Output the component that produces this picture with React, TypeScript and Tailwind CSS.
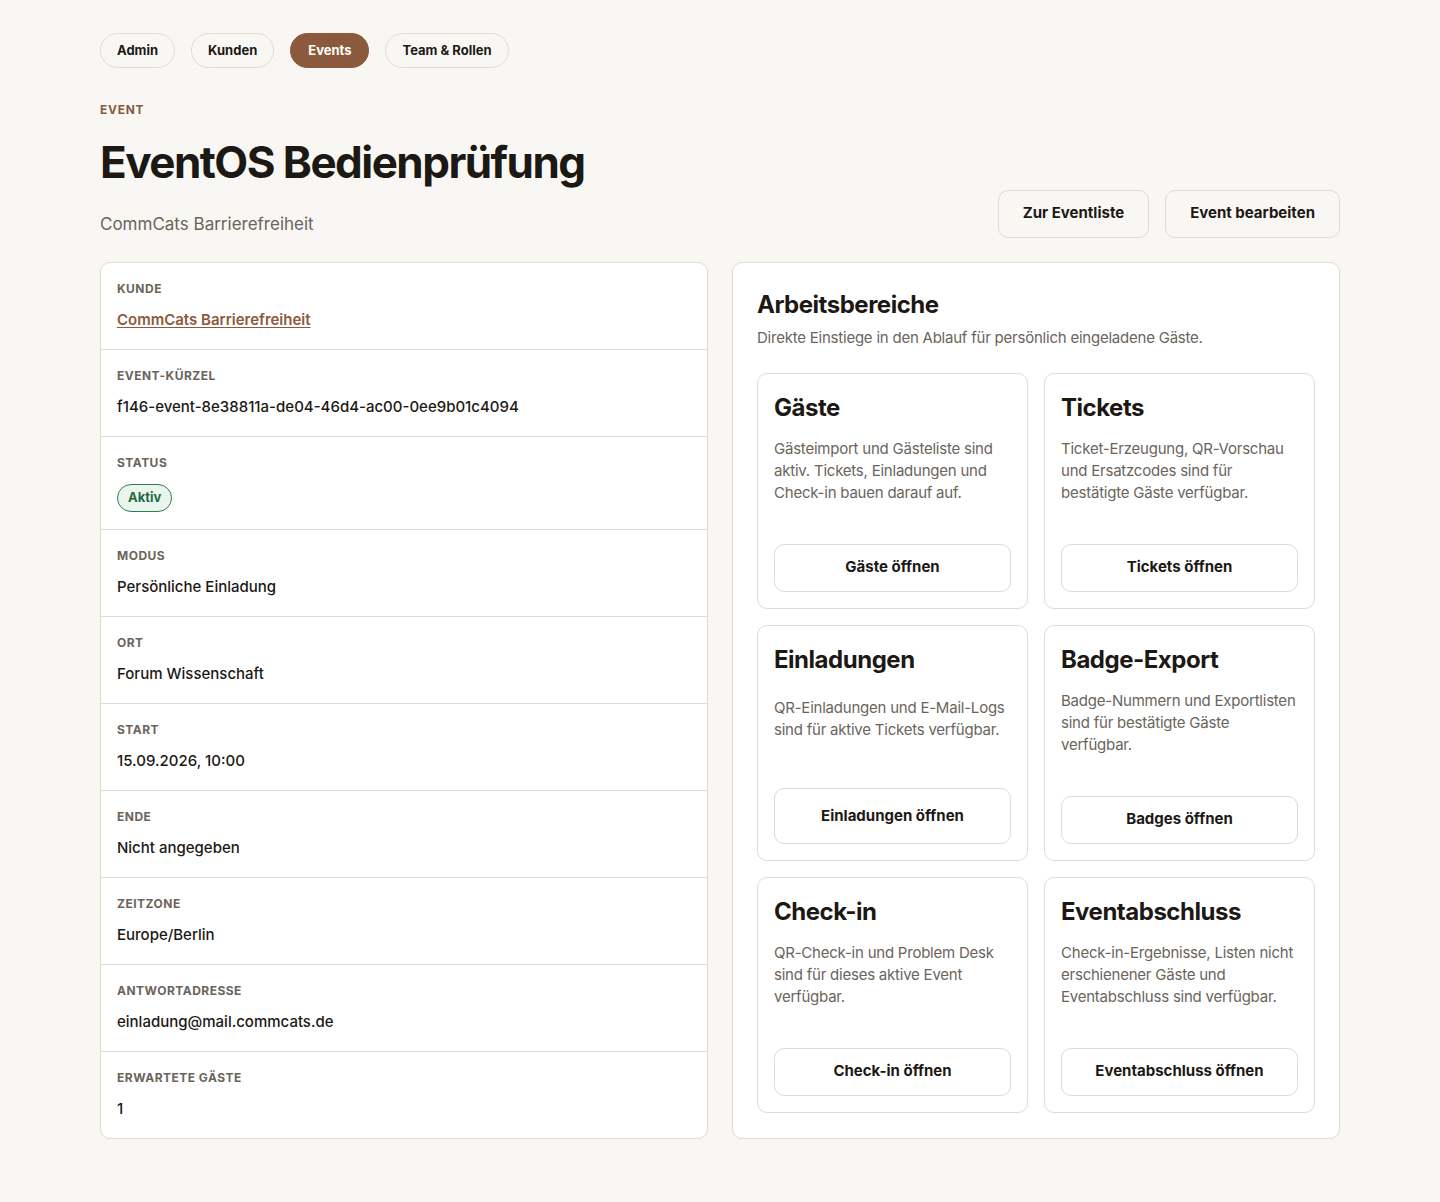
import React from 'react';

const navItems = [
  { label: 'Admin', active: false },
  { label: 'Kunden', active: false },
  { label: 'Events', active: true },
  { label: 'Team & Rollen', active: false },
];

const details: { label: string; value: string; kind?: 'link' | 'badge' }[] = [
  { label: 'Kunde', value: 'CommCats Barrierefreiheit', kind: 'link' },
  { label: 'Event-Kürzel', value: 'f146-event-8e38811a-de04-46d4-ac00-0ee9b01c4094' },
  { label: 'Status', value: 'Aktiv', kind: 'badge' },
  { label: 'Modus', value: 'Persönliche Einladung' },
  { label: 'Ort', value: 'Forum Wissenschaft' },
  { label: 'Start', value: '15.09.2026, 10:00' },
  { label: 'Ende', value: 'Nicht angegeben' },
  { label: 'Zeitzone', value: 'Europe/Berlin' },
  { label: 'Antwortadresse', value: 'einladung@mail.commcats.de' },
  { label: 'Erwartete Gäste', value: '1' },
];

const areas = [
  {
    title: 'Gäste',
    text: 'Gästeimport und Gästeliste sind aktiv. Tickets, Einladungen und Check-in bauen darauf auf.',
    action: 'Gäste öffnen',
  },
  {
    title: 'Tickets',
    text: 'Ticket-Erzeugung, QR-Vorschau und Ersatzcodes sind für bestätigte Gäste verfügbar.',
    action: 'Tickets öffnen',
  },
  {
    title: 'Einladungen',
    text: 'QR-Einladungen und E-Mail-Logs sind für aktive Tickets verfügbar.',
    action: 'Einladungen öffnen',
  },
  {
    title: 'Badge-Export',
    text: 'Badge-Nummern und Exportlisten sind für bestätigte Gäste verfügbar.',
    action: 'Badges öffnen',
  },
  {
    title: 'Check-in',
    text: 'QR-Check-in und Problem Desk sind für dieses aktive Event verfügbar.',
    action: 'Check-in öffnen',
  },
  {
    title: 'Eventabschluss',
    text: 'Check-in-Ergebnisse, Listen nicht erschienener Gäste und Eventabschluss sind verfügbar.',
    action: 'Eventabschluss öffnen',
  },
];

export default function App() {
  return (
    <div className="min-h-[1202px] bg-[#f8f7f3] text-[#1c1915] font-['Inter','Liberation_Sans',sans-serif] antialiased">
      <div className="mx-auto max-w-[1240px] pt-[33px] pb-16">
        {/* Navigation */}
        <nav className="flex gap-4">
          {navItems.map((item) => (
            <a
              key={item.label}
              className={
                item.active
                  ? 'h-[35px] px-[17px] flex items-center rounded-full border border-[#8b5a3c] bg-[#8b5a3c] text-white text-[13px] font-bold'
                  : 'h-[35px] px-[16px] flex items-center rounded-full border border-[#e2dbd0] bg-[#f9f7f3] text-[#1c1915] text-[13px] font-bold'
              }
            >
              {item.label}
            </a>
          ))}
        </nav>

        {/* Header */}
        <div className="mt-[33px] flex items-end justify-between">
          <div>
            <p className="text-[12px] leading-[18px] font-bold uppercase tracking-[0.06em] text-[#8b5a3c]">Event</p>
            <h1 className="mt-[18px] text-[44px] leading-[1.15] font-bold tracking-[-0.035em]">EventOS Bedienprüfung</h1>
            <p className="mt-[22px] text-[17px] leading-[28px] text-[#6b645c]">CommCats Barrierefreiheit</p>
          </div>
          <div className="flex gap-4">
            <button className="h-12 px-6 rounded-[10px] border border-[#e2dbd0] bg-[#f9f7f3] text-[15px] font-bold">
              Zur Eventliste
            </button>
            <button className="h-12 px-6 rounded-[10px] border border-[#e2dbd0] bg-[#f9f7f3] text-[15px] font-bold">
              Event bearbeiten
            </button>
          </div>
        </div>

        {/* Content */}
        <div className="mt-6 grid grid-cols-2 gap-6">
          <dl className="rounded-[10px] border border-[#e2dbd0] bg-white overflow-hidden">
            {details.map((d, i) => (
              <div
                key={d.label}
                className={`px-4 pt-[17px] ${d.kind === 'badge' ? 'pb-[17px]' : 'pb-[15px]'} ${i > 0 ? 'border-t border-[#e2dbd0]' : ''}`}
              >
                <dt className="text-[12px] leading-[18px] font-bold uppercase tracking-[0.04em] text-[#6b645c]">{d.label}</dt>
                {d.kind === 'badge' ? (
                  <dd className="mt-3">
                    <span className="inline-flex h-7 items-center rounded-full border border-[#2e7d52] bg-[#eaf5ee] px-[10px] text-[13px] font-bold text-[#1e6b43]">
                      {d.value}
                    </span>
                  </dd>
                ) : d.kind === 'link' ? (
                  <dd className="mt-2 text-[15px] leading-7 font-semibold">
                    <a className="text-[#8b5a3c] underline underline-offset-2">{d.value}</a>
                  </dd>
                ) : (
                  <dd className="mt-2 text-[15px] leading-7 font-medium">{d.value}</dd>
                )}
              </div>
            ))}
          </dl>

          <section className="rounded-[10px] border border-[#e2dbd0] bg-white p-6">
            <h2 className="text-[24px] leading-9 font-bold tracking-[-0.02em]">Arbeitsbereiche</h2>
            <p className="mt-1 text-[15px] leading-[22px] tracking-[-0.015em] text-[#6b645c]">
              Direkte Einstiege in den Ablauf für persönlich eingeladene Gäste.
            </p>
            <div className="mt-6 grid grid-cols-2 gap-4">
              {areas.map((a) => (
                <div key={a.title} className="grid gap-3 rounded-[10px] border border-[#e2dbd0] bg-white p-4">
                  <h3 className="text-[24px] leading-9 font-bold tracking-[-0.02em]">{a.title}</h3>
                  <p className="mb-7 text-[15px] leading-[22px] tracking-[-0.015em] text-[#6b645c]">{a.text}</p>
                  <button className="min-h-12 rounded-[10px] border border-[#e2dbd0] bg-white text-[15px] font-bold">
                    {a.action}
                  </button>
                </div>
              ))}
            </div>
          </section>
        </div>
      </div>
    </div>
  );
}
